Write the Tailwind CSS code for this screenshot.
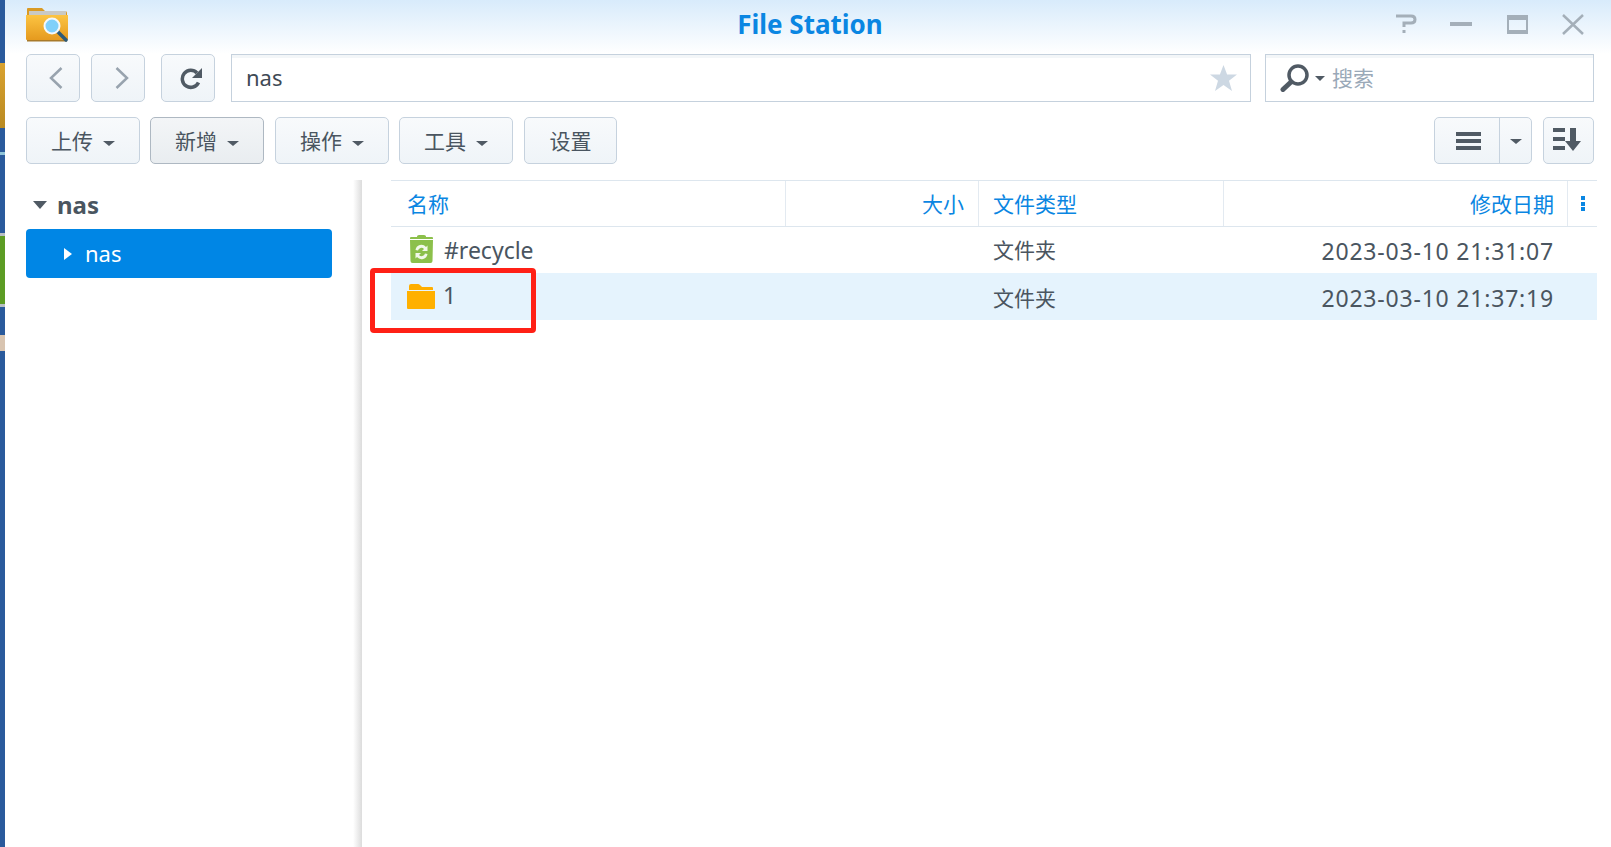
<!DOCTYPE html>
<html lang="zh">
  <head>
    <meta charset="UTF-8" />
    <title>File Station</title>
    <script src="https://cdn.jsdelivr.net/npm/@tailwindcss/browser@4"></script>
  </head>
  <body class="h-[847px] w-[1611px] overflow-hidden bg-white font-['Noto_Sans','Noto_Sans_CJK_SC',sans-serif] text-[21px] text-[#4a5560]">
    <div class="relative flex h-full">
      <!-- desktop showing behind the window -->
      <div class="flex w-[5px] flex-col bg-[#2a5a9c]">
        <div class="mt-[63px] h-[65px] bg-gradient-to-b from-[#d9a22f] to-[#b98a22]"></div>
        <div class="mt-[24px] h-[3px] bg-[#8fc4d8]"></div>
        <div class="mt-[78px] h-[74px] border-y-[3px] border-[#b9bfc4] bg-[#5c9c24]"></div>
        <div class="mt-[28px] h-[16px] bg-[#d8c4b0]"></div>
      </div>

      <div class="flex min-w-0 flex-1 flex-col">
        <!-- title bar -->
        <div class="grid h-[54px] grid-cols-[1fr_auto_1fr] items-center bg-gradient-to-b from-[#d8ebfb] to-white pb-[6px] pl-[21px] pr-[17px]">
          <svg class="h-[36px] w-[43px]" viewBox="0 0 43 36">
            <defs>
              <linearGradient id="fold" x1="0" y1="0" x2="0" y2="1">
                <stop offset="0" stop-color="#fcc442" />
                <stop offset="1" stop-color="#e59a1e" />
              </linearGradient>
            </defs>
            <path d="M1 3q0-1 1-1h14l3 3h20q2 0 2 2v4H1z" fill="#d99a24" />
            <rect x="3" y="5" width="37" height="6" fill="#c9c9c4" />
            <path d="M0 9h42v24q0 1-1 1H1q-1 0-1-1z" fill="url(#fold)" />
            <rect x="1" y="34" width="40" height="1.5" fill="#a87a2a" />
            <line x1="32" y1="26" x2="40" y2="34" stroke="#2c5a78" stroke-width="3.5" stroke-linecap="round" />
            <circle cx="26" cy="20" r="7.5" fill="#7fd0fa" stroke="#f4f8fa" stroke-width="2" />
          </svg>
          <div class="text-[26px] font-bold leading-none text-[#0a86e2]">File Station</div>
          <div class="flex items-center justify-end gap-[34px] pr-[10px]">
            <svg class="h-[20px] w-[22px]" viewBox="0 0 22 20" fill="none" stroke="#a4afb9" stroke-width="3">
              <path d="M1 2h15q4 0 4 3.500t-4 3.500h-7v4" />
              <rect x="7.500" y="16" width="3" height="3" fill="#a4afb9" stroke="none" />
            </svg>
            <div class="-ml-px h-[4px] w-[22px] bg-[#a4afb9]"></div>
            <div class="ml-px h-[19px] w-[21px] border-x-[2px] border-b-[4px] border-t-[5px] border-[#a4afb9]"></div>
            <svg class="h-[21px] w-[22px]" viewBox="0 0 22 21" fill="none" stroke="#a4afb9" stroke-width="2.500">
              <path d="M1 1l20 19M21 1L1 20" />
            </svg>
          </div>
        </div>

        <!-- navigation row -->
        <div class="flex h-[48px] pl-[21px] pr-[17px]">
          <button class="flex w-[54px] items-center justify-center rounded-[5px] border border-[#c6d2de] bg-gradient-to-b from-[#f8fafc] to-[#eff4f8] pl-[6px]">
            <svg class="h-[22px] w-[14px]" viewBox="0 0 14 22" fill="none" stroke="#98a3ae" stroke-width="2.500"><path d="M12.500 1L2 11l10.500 10" /></svg>
          </button>
          <button class="ml-[11px] flex w-[54px] items-center justify-center rounded-[5px] border border-[#c6d2de] bg-gradient-to-b from-[#f8fafc] to-[#eff4f8] pl-[8px]">
            <svg class="h-[22px] w-[14px]" viewBox="0 0 14 22" fill="none" stroke="#98a3ae" stroke-width="2.500"><path d="M1.500 1L12 11 1.500 21" /></svg>
          </button>
          <button class="ml-[16px] flex w-[54px] items-center justify-center rounded-[5px] border border-[#c6d2de] bg-gradient-to-b from-[#f8fafc] to-[#eff4f8] pl-[6px]">
            <svg class="h-[23px] w-[23px]" viewBox="0 0 23 23" fill="none">
              <path d="M18.500 15.500A8.500 8.500 0 1 1 17 6" stroke="#505a64" stroke-width="3.500" />
              <path d="M22 1v10H12z" fill="#505a64" />
            </svg>
          </button>
          <div class="ml-[16px] flex w-[1020px] items-center justify-between border border-[#c5d1dd] pl-[14px] pr-[13px] shadow-[inset_0_3px_0_#f3f6f8]">
            <span class="-mt-[2px] text-[22px] leading-none text-[#3f4a55]">nas</span>
            <svg class="h-[26px] w-[27px]" viewBox="0 0 27 26"><path d="M13.500 0l3.600 9.500H27l-8 6.300L22 26l-8.500-6-8.500 6 3-10.200-8-6.300h9.900z" fill="#cdd8e3" /></svg>
          </div>
          <div class="ml-[14px] flex w-[329px] items-center border border-[#c5d1dd] pl-[14px] shadow-[inset_0_3px_0_#f3f6f8]">
            <svg class="h-[28px] w-[29px]" viewBox="0 0 29 28" fill="none">
              <circle cx="18" cy="11" r="9" stroke="#505a64" stroke-width="3.500" />
              <line x1="11" y1="18" x2="3" y2="25.500" stroke="#505a64" stroke-width="5" stroke-linecap="round" />
            </svg>
            <span class="ml-[6px] border-x-[5px] border-t-[5px] border-x-transparent border-t-[#505a64]"></span>
            <span class="ml-[7px] pt-[2px] text-[#9aa9b8]">搜索</span>
          </div>
        </div>

        <!-- toolbar -->
        <div class="mt-[15px] flex h-[47px] pl-[21px] pr-[17px]">
          <button class="flex w-[114px] items-center justify-center gap-[10px] rounded-[5px] border border-[#c6d2de] bg-gradient-to-b from-[#f8fafc] to-[#eff4f8] pt-[2px]">上传<span class="mt-[4px] border-x-[6px] border-t-[5px] border-x-transparent border-t-[#505a64]"></span></button>
          <button class="ml-[10px] flex w-[114px] items-center justify-center gap-[10px] rounded-[5px] border border-[#aeb8c2] bg-gradient-to-b from-[#f3f5f7] to-[#e9edf0] pt-[2px]">新增<span class="mt-[4px] border-x-[6px] border-t-[5px] border-x-transparent border-t-[#505a64]"></span></button>
          <button class="ml-[11px] flex w-[114px] items-center justify-center gap-[10px] rounded-[5px] border border-[#c6d2de] bg-gradient-to-b from-[#f8fafc] to-[#eff4f8] pt-[2px]">操作<span class="mt-[4px] border-x-[6px] border-t-[5px] border-x-transparent border-t-[#505a64]"></span></button>
          <button class="ml-[10px] flex w-[114px] items-center justify-center gap-[10px] rounded-[5px] border border-[#c6d2de] bg-gradient-to-b from-[#f8fafc] to-[#eff4f8] pt-[2px]">工具<span class="mt-[4px] border-x-[6px] border-t-[5px] border-x-transparent border-t-[#505a64]"></span></button>
          <button class="ml-[11px] flex w-[93px] items-center justify-center rounded-[5px] border border-[#c6d2de] bg-gradient-to-b from-[#f8fafc] to-[#eff4f8] pt-[2px]">设置</button>
          <div class="ml-auto flex w-[98px] rounded-[5px] border border-[#c6d2de] bg-gradient-to-b from-[#f8fafc] to-[#eff4f8]">
            <div class="flex w-[65px] flex-col items-center justify-center gap-[3px] border-r border-[#c6d2de] pl-[2px]">
              <div class="h-[4px] w-[25px] bg-[#505a64]"></div>
              <div class="h-[4px] w-[25px] bg-[#505a64]"></div>
              <div class="h-[4px] w-[25px] bg-[#505a64]"></div>
            </div>
            <div class="flex flex-1 items-center justify-center">
              <span class="mt-[2px] border-x-[6px] border-t-[5px] border-x-transparent border-t-[#505a64]"></span>
            </div>
          </div>
          <button class="ml-[11px] flex w-[51px] items-center justify-center rounded-[5px] border border-[#c6d2de] bg-gradient-to-b from-[#f8fafc] to-[#eff4f8] pb-[2px] pr-[4px]">
            <svg class="h-[23px] w-[28px]" viewBox="0 0 28 23" fill="#505a64">
              <rect x="0" y="0" width="12" height="4" />
              <rect x="0" y="9" width="12" height="4" />
              <rect x="0" y="18" width="12" height="4" />
              <path d="M17 0h6v13h5L20 23l-8-10h5z" />
            </svg>
          </button>
        </div>

        <!-- body -->
        <div class="mt-[16px] flex flex-1">
          <div class="flex w-[357px] flex-col bg-gradient-to-r from-white from-[97.5%] to-[#dcdcdc] pl-[21px] pr-[30px]">
            <div class="flex h-[49px] items-center pl-[7px]">
              <span class="border-x-[7px] border-t-[8px] border-x-transparent border-t-[#505a64]"></span>
              <span class="ml-[10px] text-[24px] font-bold">nas</span>
            </div>
            <div class="flex h-[49px] items-center rounded-[4px] bg-[#0086e5] pl-[38px] text-white">
              <span class="border-y-[6px] border-l-[8px] border-y-transparent border-l-white"></span>
              <span class="ml-[13px] text-[22px]">nas</span>
            </div>
          </div>

          <div class="ml-[29px] w-[1206px]">
            <div class="grid h-[47px] grid-cols-[395px_193px_245px_344px_29px] items-center border-y border-[#dde6ee] text-[#0a86e2]">
              <div class="flex h-full items-center border-r border-[#e3eaf1] pl-[16px] pt-[2px]">名称</div>
              <div class="flex h-full items-center justify-end border-r border-[#e3eaf1] pr-[14px] pt-[2px]">大小</div>
              <div class="flex h-full items-center border-r border-[#e3eaf1] pl-[14px] pt-[2px]">文件类型</div>
              <div class="flex h-full items-center justify-end border-r border-[#e3eaf1] pr-[13px] pt-[2px]">修改日期</div>
              <div class="flex flex-col items-center gap-[1.5px]">
                <div class="size-[4px] bg-[#0a86e2]"></div>
                <div class="size-[4px] bg-[#0a86e2]"></div>
                <div class="size-[4px] bg-[#0a86e2]"></div>
              </div>
            </div>

            <div class="grid h-[46px] grid-cols-[395px_193px_245px_344px_29px] items-center">
              <div class="flex items-center pl-[18px]">
                <svg class="-mt-[2px] h-[28px] w-[25px]" viewBox="0 0 25 28">
                  <path d="M8 1.500q0-1.500 2-1.500h5q2 0 2 1.500V2h6q1 0 1 1v1H1V3q0-1 1-1h6z" fill="#8cc04b" />
                  <path d="M1 5h23l-.5 21q0 2-2 2h-18q-2 0-2-2z" fill="#8cc04b" />
                  <path d="M6.500 15a6 6 0 0 1 10.500-3l1.500-1.500V16h-5.500l2-2a3.500 3.500 0 0 0-6 1.500zM18.500 19a6 6 0 0 1-10.500 3l-1.500 1.500V18H12l-2 2a3.500 3.500 0 0 0 6-1.500z" fill="#f2f8ea" />
                </svg>
                <span class="ml-[10px] text-[23px]">#recycle</span>
              </div>
              <div></div>
              <div class="pl-[14px] pt-[2px]">文件夹</div>
              <div class="pr-[14px] pt-[2px] text-right text-[23px] tracking-[0.8px]">2023-03-10 21:31:07</div>
              <div></div>
            </div>

            <div class="grid h-[47px] grid-cols-[395px_193px_245px_344px_29px] items-center bg-[#e5f3fd]">
              <div class="flex items-center pl-[16px]">
                <svg class="h-[25px] w-[28px]" viewBox="0 0 28 25">
                  <path d="M2 2q0-2 2-2h7q1 0 2 1l2 2h10q1 0 1 1v2H2z" fill="#ffae00" />
                  <path d="M0 7h28v17q0 1-1 1H1q-1 0-1-1z" fill="#ffb000" />
                </svg>
                <span class="ml-[8px] -mt-[3px] text-[23px]">1</span>
              </div>
              <div></div>
              <div class="pl-[14px] pt-[4px]">文件夹</div>
              <div class="pr-[14px] pt-[3px] text-right text-[23px] tracking-[0.8px]">2023-03-10 21:37:19</div>
              <div></div>
            </div>
          </div>
        </div>
      </div>

      <!-- red marker drawn over the screenshot -->
      <div class="absolute left-[370px] top-[268px] h-[65px] w-[166px] rounded-[4px] border-[5px] border-[#ff2016]"></div>
    </div>
  </body>
</html>
